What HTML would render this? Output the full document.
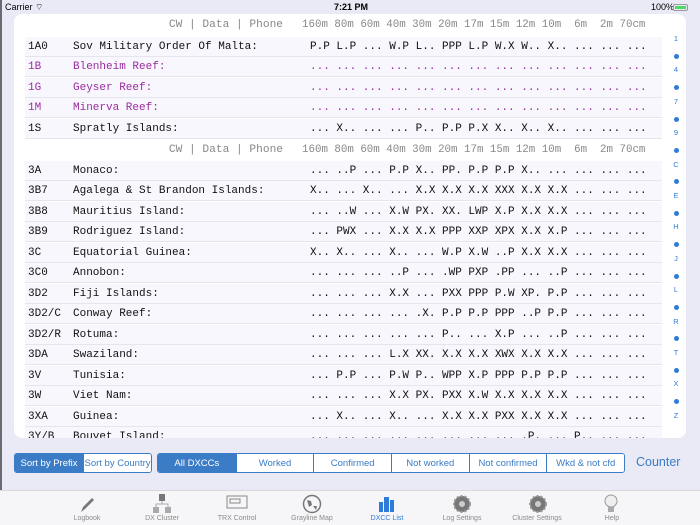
<!DOCTYPE html>
<html><head><meta charset="utf-8"><style>
*{margin:0;padding:0;box-sizing:border-box}
body{width:700px;height:525px;background:#e9eaf6;position:relative;overflow:hidden;font-family:"Liberation Sans",sans-serif}
.edge{position:absolute;left:0;top:0;width:2px;height:490px;background:#6a6a70}
.sb{position:absolute;top:2px;font-size:9px;color:#000}
.card{position:absolute;left:14px;top:14px;width:672px;height:424px;background:#fff;border-radius:8px;overflow:hidden}
.row{position:absolute;left:11px;width:637px;height:20px;background:#f8f7fd;border-bottom:1px solid #e6e5ee;font-family:"Liberation Mono",monospace;font-size:11px;line-height:20px;color:#111;white-space:pre}
.row span{position:absolute}
.p{color:#9b2ca0}
.hdr{position:absolute;height:20px;font-family:"Liberation Mono",monospace;font-size:10.8px;line-height:20px;color:#888;white-space:pre}
.idx{position:absolute;left:673px;width:6px;text-align:center;font-size:7.5px;color:#2f7bd9}
.dot{position:absolute;left:673.5px;width:5px;height:5px;border-radius:50%;background:#2f7bd9}
.seg{position:absolute;top:453px;height:20px;border:1px solid #3a7cc6;border-radius:3px;display:flex;overflow:hidden;font-size:9.5px;color:#3a7cc6;white-space:nowrap}
.seg div{display:flex;align-items:center;justify-content:center;border-left:1px solid #3a7cc6;background:#fff}
.seg div:first-child{border-left:none}
.seg .on{background:#3a7cc6;color:#fff}
.tab{position:absolute;top:490px;left:0;width:700px;height:35px;background:#f6f6f8;border-top:1px solid #d8d8de}
.ti{position:absolute;top:24px;font-size:7px;color:#8a8a8a;text-align:center;width:80px}
</style></head><body>
<div class="edge"></div>
<div class="sb" style="left:5px">Carrier ︎⌔</div>
<div class="sb" style="left:334px;font-weight:bold">7:21 PM</div>
<div class="sb" style="left:651px">100%</div>
<div style="position:absolute;left:673px;top:4px;width:15px;height:7px;border:1px solid #999;border-radius:2px;padding:1px"><div style="width:100%;height:100%;background:#4cd964"></div></div>
<div class="card">
<div class="hdr" style="top:1px;right:403px;font-size:11.2px">CW | Data | Phone</div>
<div class="hdr" style="top:1px;left:288px">160m 80m 60m 40m 30m 20m 17m 15m 12m 10m  6m  2m 70cm</div>
<div class="hdr" style="top:126px;right:403px;font-size:11.2px">CW | Data | Phone</div>
<div class="hdr" style="top:126px;left:288px">160m 80m 60m 40m 30m 20m 17m 15m 12m 10m  6m  2m 70cm</div>
<div id="rows"></div>
</div>
<div id="ix"></div>
<div class="seg" style="left:14px;width:138px"><div class="on" style="width:69px">Sort by Prefix</div><div style="width:69px">Sort by Country</div></div>
<div class="seg" style="left:157px;width:468px"><div class="on" style="width:78px">All DXCCs</div><div style="width:78px">Worked</div><div style="width:78px">Confirmed</div><div style="width:78px">Not worked</div><div style="width:78px">Not confirmed</div><div style="width:78px">Wkd &amp; not cfd</div></div>
<div style="position:absolute;left:636px;top:455px;font-size:12.5px;color:#3a7cc6">Counter</div>
<div class="tab">
<svg style="position:absolute;left:78px;top:5px" width="18" height="18"><path d="M3 16 L5 11 L14 2 L16 4 L7 13 Z" fill="#777"/></svg>
<svg style="position:absolute;left:152px;top:3px" width="20" height="20"><rect x="7" y="0" width="6" height="7" fill="#777"/><rect x="1" y="13" width="6" height="6" fill="#aaa"/><rect x="13" y="13" width="6" height="6" fill="#aaa"/><path d="M10 7v3M4 13v-3h12v3" stroke="#aaa" fill="none"/></svg>
<svg style="position:absolute;left:226px;top:4px" width="22" height="14"><rect x="1" y="1" width="20" height="12" fill="none" stroke="#888"/><rect x="4" y="4" width="10" height="4" fill="none" stroke="#888"/></svg>
<svg style="position:absolute;left:302px;top:3px" width="20" height="20"><circle cx="10" cy="10" r="8.5" fill="none" stroke="#777" stroke-width="1.5"/><path d="M5 6l4 1 1 4-3 2zM11 12l4 0-1 4z" fill="#777"/></svg>
<svg style="position:absolute;left:377px;top:3px" width="20" height="20"><rect x="2" y="8" width="4" height="10" fill="#2f7bd9"/><rect x="7" y="3" width="5" height="15" fill="#2f7bd9"/><rect x="13" y="6" width="4" height="12" fill="#2f7bd9"/></svg>
<svg style="position:absolute;left:452px;top:3px" width="20" height="20"><circle cx="10" cy="10" r="8" fill="#777" stroke="#999" stroke-width="2" stroke-dasharray="2 2"/><circle cx="10" cy="10" r="3" fill="#ccc"/></svg>
<svg style="position:absolute;left:528px;top:3px" width="20" height="20"><circle cx="10" cy="10" r="8" fill="#777" stroke="#999" stroke-width="2" stroke-dasharray="2 2"/><circle cx="10" cy="10" r="3" fill="#ccc"/></svg>
<svg style="position:absolute;left:603px;top:3px" width="16" height="20"><circle cx="8" cy="7" r="6" fill="#eee" stroke="#999"/><rect x="5" y="13" width="6" height="5" fill="#aaa"/></svg>
<div class="ti" style="left:47px">Logbook</div>
<div class="ti" style="left:122px">DX Cluster</div>
<div class="ti" style="left:197px">TRX Control</div>
<div class="ti" style="left:272px">Grayline Map</div>
<div class="ti" style="left:347px;color:#2f7bd9">DXCC List</div>
<div class="ti" style="left:422px">Log Settings</div>
<div class="ti" style="left:497px">Cluster Settings</div>
<div class="ti" style="left:572px">Help</div>
</div>
<script>
var R=[
[22,"1A0","Sov Military Order Of Malta:","P.P L.P ... W.P L.. PPP L.P W.X W.. X.. ... ... ...",0],
[42,"1B","Blenheim Reef:","... ... ... ... ... ... ... ... ... ... ... ... ...",1],
[63,"1G","Geyser Reef:","... ... ... ... ... ... ... ... ... ... ... ... ...",1],
[83,"1M","Minerva Reef:","... ... ... ... ... ... ... ... ... ... ... ... ...",1],
[104,"1S","Spratly Islands:","... X.. ... ... P.. P.P P.X X.. X.. X.. ... ... ...",0],
[146,"3A","Monaco:","... ..P ... P.P X.. PP. P.P P.P X.. ... ... ... ...",0],
[166,"3B7","Agalega & St Brandon Islands:","X.. ... X.. ... X.X X.X X.X XXX X.X X.X ... ... ...",0],
[187,"3B8","Mauritius Island:","... ..W ... X.W PX. XX. LWP X.P X.X X.X ... ... ...",0],
[207,"3B9","Rodriguez Island:","... PWX ... X.X X.X PPP XXP XPX X.X X.P ... ... ...",0],
[228,"3C","Equatorial Guinea:","X.. X.. ... X.. ... W.P X.W ..P X.X X.X ... ... ...",0],
[248,"3C0","Annobon:","... ... ... ..P ... .WP PXP .PP ... ..P ... ... ...",0],
[269,"3D2","Fiji Islands:","... ... ... X.X ... PXX PPP P.W XP. P.P ... ... ...",0],
[289,"3D2/C","Conway Reef:","... ... ... ... .X. P.P P.P PPP ..P P.P ... ... ...",0],
[310,"3D2/R","Rotuma:","... ... ... ... ... P.. ... X.P ... ..P ... ... ...",0],
[330,"3DA","Swaziland:","... ... ... L.X XX. X.X X.X XWX X.X X.X ... ... ...",0],
[351,"3V","Tunisia:","... P.P ... P.W P.. WPP X.P PPP P.P P.P ... ... ...",0],
[371,"3W","Viet Nam:","... ... ... X.X PX. PXX X.W X.X X.X X.X ... ... ...",0],
[392,"3XA","Guinea:","... X.. ... X.. ... X.X X.X PXX X.X X.X ... ... ...",0],
[412,"3Y/B","Bouvet Island:","... ... ... ... ... ... ... ... .P. ... P.. ... ...",0]];
var h="";R.forEach(function(r){h+='<div class="row'+(r[4]?' p':'')+'" style="top:'+(r[0]+1)+'px"><span style="left:3px">'+r[1]+'</span><span style="left:48px">'+r[2].replace('&','&amp;')+'</span><span style="left:285px">'+r[3]+'</span></div>'});
document.getElementById('rows').innerHTML=h;
var L="1•4•7•9•C•E•H•J•L•R•T•X•Z",s="";
for(var i=0;i<L.length;i++){var y=34+i*15.7;if(L[i]=="•")s+='<div class="dot" style="top:'+(y+4)+'px"></div>';else s+='<div class="idx" style="top:'+y+'px">'+L[i]+'</div>';}
document.getElementById('ix').innerHTML=s;
</script>
</body></html>
